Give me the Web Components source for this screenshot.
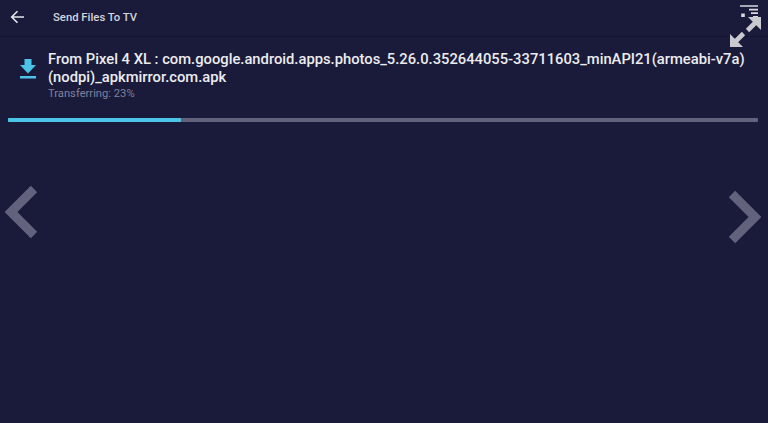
<!DOCTYPE html>
<html>
<head>
<meta charset="utf-8">
<title>Send Files To TV</title>
<style>
  html, body { margin: 0; height: 100%; background: #1a1b3a; overflow: hidden; }
  body { font-family: Roboto, "Liberation Sans", sans-serif; }
</style>
</head>
<body>
<tv-screen>
  <tv-header slot="header" title="Send Files To TV"></tv-header>
  <tv-transfer slot="body" percent="23">
    <span slot="name">From Pixel 4 XL : com.google.android.apps.photos_5.26.0.352644055-33711603_minAPI21(armeabi-v7a)<br>(nodpi)_apkmirror.com.apk</span>
    <span slot="status">Transferring: 23%</span>
  </tv-transfer>
</tv-screen>
<script>
class TvScreen extends HTMLElement {
  constructor() {
    super()
    this.attachShadow({ mode: 'open' })
    this.shadowRoot.innerHTML = `
      <style>
        :host {
          display: flex;
          flex-direction: column;
          height: 423px;
          position: relative;
          background: #1a1b3a;
        }
        svg {
          position: absolute;
          fill: none;
          stroke: #62627c;
          stroke-width: 9;
        }
        .prev { left: 2px; top: 185px; }
        .next { left: 727px; top: 190px; }
        .expand { left: 728px; top: 15px; }
        .queue { left: 738px; top: 4px; }
      </style>
      <slot name="header"></slot>
      <slot name="body"></slot>
      <svg class="queue" width="24" height="24" viewBox="0 0 24 24" style="stroke:#d8d8de;stroke-width:1.7">
        <path d="M2 2H20M11 5.6H20M13 9.2H20M15 12.8H20"/>
        <path d="M3.2 9.5H6.8V13H3.2Z" fill="#d8d8de" stroke="none" style="stroke-width:0"/>
      </svg>
      <svg class="expand" width="36" height="36" viewBox="0 0 36 36" style="stroke:#c9c9d0;stroke-width:4.6">
        <path d="M33 2V15L20 2Z" fill="#c9c9d0" stroke="none"/>
        <path d="M2 32V19L15 32Z" fill="#c9c9d0" stroke="none"/>
        <path d="M27 8 19.5 15.5M8 26 15.5 18.5"/>
      </svg>
      <svg class="prev" width="36" height="56" viewBox="0 0 36 56"><path d="M32 4 9 27 32 50"/></svg>
      <svg class="next" width="36" height="56" viewBox="0 0 36 56"><path d="M5 4 28 27 5 50"/></svg>
    `
  }
}
customElements.define('tv-screen', TvScreen)

class TvHeader extends HTMLElement {
  constructor() {
    super()
    this.attachShadow({ mode: 'open' })
    this.shadowRoot.innerHTML = `
      <style>
        :host {
          display: flex;
          align-items: center;
          height: 34px;
          padding: 0 0 2px 10px;
          border-bottom: 1px solid #15152f;
        }
        svg { width: 15px; height: 14px; fill: none; stroke: #e6e6ea; stroke-width: 1.6; }
        span {
          margin-left: 28px;
          font-size: 11.3px;
          font-weight: 500;
          color: #d5d5db;
        }
      </style>
      <svg viewBox="0 0 15 14"><path d="M14 7H2M7.5 1.2 1.7 7l5.8 5.8"/></svg>
      <span>${this.getAttribute('title')}</span>
    `
  }
}
customElements.define('tv-header', TvHeader)

class TvTransfer extends HTMLElement {
  constructor() {
    super()
    this.attachShadow({ mode: 'open' })
    const percent = this.getAttribute('percent')
    this.shadowRoot.innerHTML = `
      <style>
        :host { display: block; padding: 13px 10px 0 8px; }
        .row { display: flex; gap: 12px; height: 68px; padding-left: 12px; }
        .icon { flex: none; padding-top: 9px; }
        .icon svg { display: block; width: 16px; height: 20px; fill: #4cc4ea; }
        .name {
          font-size: 14.75px;
          line-height: 18px;
          font-weight: 500;
          color: #ececf0;
          white-space: nowrap;
        }
        .status { font-size: 11.2px; line-height: 14px; margin-top: 1px; color: #80809a; }
        .track { height: 3.5px; background: #62627c; border-radius: 1px; }
        .fill { height: 100%; width: ${percent}%; background: #4cc4ea; border-radius: 1px; }
      </style>
      <div class="row">
        <div class="icon">
          <svg viewBox="0 0 16 20"><path d="M4.5 0H11.5V6H16L8 14.5 0 6H4.5Z"/><path d="M0 17H16V19.5H0Z"/></svg>
        </div>
        <div>
          <div class="name"><slot name="name"></slot></div>
          <div class="status"><slot name="status"></slot></div>
        </div>
      </div>
      <div class="track"><div class="fill"></div></div>
    `
  }
}
customElements.define('tv-transfer', TvTransfer)
</script>
</body>
</html>
